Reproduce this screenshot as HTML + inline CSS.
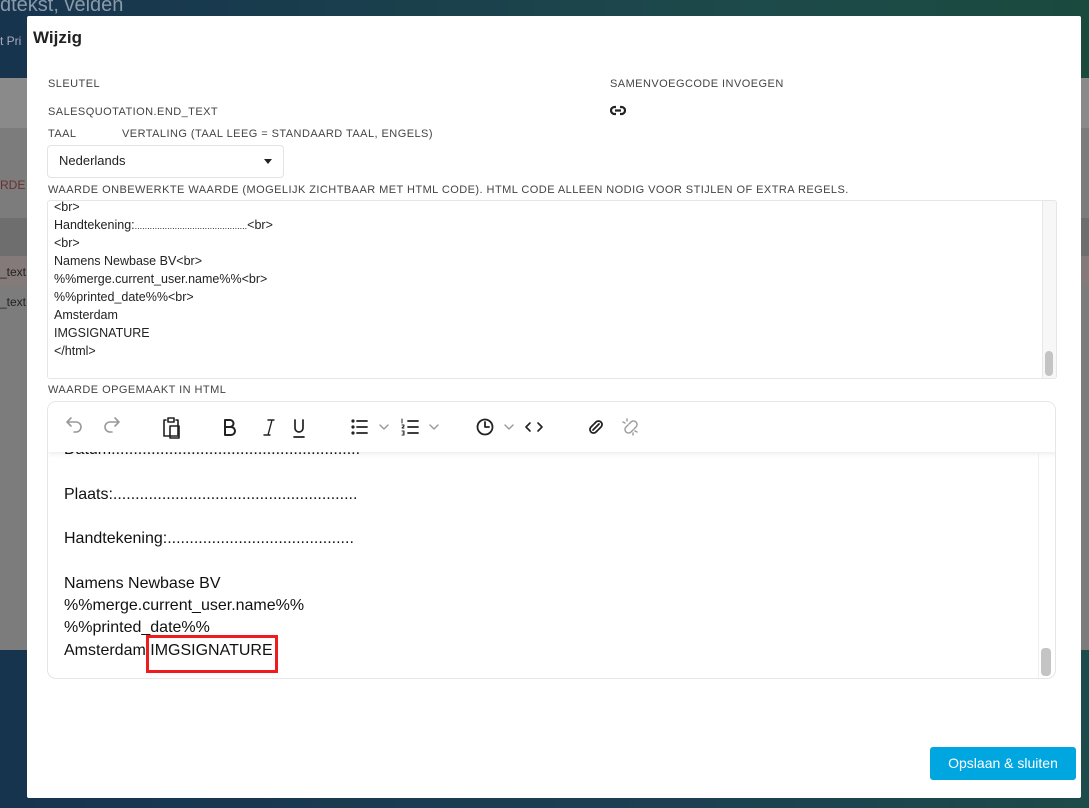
<!DOCTYPE html>
<html><head><meta charset="utf-8"><style>
*{box-sizing:border-box;margin:0;padding:0}
body{width:1089px;height:808px;position:relative;overflow:hidden;font-family:"Liberation Sans",sans-serif;background:#7a7a7a}
.abs{position:absolute}
.lbl{position:absolute;font-size:11px;color:#444;letter-spacing:.45px;white-space:nowrap}
.raw div{height:18px;line-height:18px;font-size:12.5px;color:#222;white-space:nowrap}
.ed div{position:absolute;left:16px;font-size:16px;color:#111;white-space:nowrap;line-height:20px}
</style></head><body>
<div class="abs" style="left:0;top:0;width:1089px;height:78px;background:linear-gradient(90deg,#17344f,#1d4a4a 70%,#1a4a3e)"></div>
<div class="abs" style="left:0;top:-6px;font-size:20px;color:#8a9aa8">dtekst, velden</div>
<div class="abs" style="left:0;top:34px;font-size:12px;color:#aab">t Pri</div>
<div class="abs" style="left:0;top:78px;width:1089px;height:50px;background:#8a8a8a"></div>
<div class="abs" style="left:0;top:128px;width:1089px;height:522px;background:#7c7c7c"></div>
<div class="abs" style="left:0;top:218px;width:1089px;height:38px;background:#6e6e6e"></div>
<div class="abs" style="left:0;top:256px;width:1089px;height:30px;background:#847a7a"></div>
<div class="abs" style="left:0;top:650px;width:1089px;height:158px;background:linear-gradient(90deg,#17344f,#1c3f52 60%,#1d4a4a)"></div>
<div class="abs" style="left:0;top:178px;font-size:12px;color:#6a3030">RDE</div>
<div class="abs" style="left:0;top:265px;font-size:12px;color:#222">_text</div>
<div class="abs" style="left:0;top:295px;font-size:12px;color:#222">_text</div>

<div class="abs" style="left:27px;top:16px;width:1054px;height:782px;background:#fff;border-radius:2px"></div>
<div class="abs" style="left:33px;top:28px;font-size:17px;font-weight:bold;color:#222">Wijzig</div>
<div class="lbl" style="left:48px;top:78px">SLEUTEL</div>
<div class="lbl" style="left:48px;top:106px">SALESQUOTATION.END_TEXT</div>
<div class="lbl" style="left:610px;top:78px">SAMENVOEGCODE INVOEGEN</div>
<svg class="abs" style="left:610px;top:105px" width="16" height="11" viewBox="0 0 16 11"><path d="M6 2H4.5a3.5 3.5 0 0 0 0 7H6M10 2h1.5a3.5 3.5 0 0 1 0 7H10M5 5.5h6" fill="none" stroke="#222" stroke-width="2.2"/></svg>
<div class="lbl" style="left:48px;top:128px">TAAL</div>
<div class="lbl" style="left:122px;top:128px">VERTALING (TAAL LEEG = STANDAARD TAAL, ENGELS)</div>
<div class="abs" style="left:47px;top:145px;width:237px;height:33px;border:1px solid #e3e3e3;border-radius:4px"></div>
<div class="abs" style="left:59px;top:153px;font-size:13px;color:#222">Nederlands</div>
<div class="abs" style="left:264px;top:159px;width:0;height:0;border-left:4.5px solid transparent;border-right:4.5px solid transparent;border-top:5px solid #222"></div>
<div class="lbl" style="left:48px;top:184px">WAARDE ONBEWERKTE WAARDE (MOGELIJK ZICHTBAAR MET HTML CODE). HTML CODE ALLEEN NODIG VOOR STIJLEN OF EXTRA REGELS.</div>
<div class="abs" style="left:47px;top:200px;width:1010px;height:179px;border:1px solid #e6e6e6;border-radius:3px;overflow:hidden">
 <div class="raw abs" style="left:6px;top:-3px">
  <div>&lt;br&gt;</div><div>Handtekening:<span style="font-size:9px">.............................................</span>&lt;br&gt;</div><div>&lt;br&gt;</div><div>Namens Newbase BV&lt;br&gt;</div><div>%%merge.current_user.name%%&lt;br&gt;</div><div>%%printed_date%%&lt;br&gt;</div><div>Amsterdam</div><div>IMGSIGNATURE</div><div>&lt;/html&gt;</div>
 </div>
 <div class="abs" style="left:994px;top:0;width:15px;height:179px;background:#f7f7f7;border-left:1px solid #e8e8e8"></div>
 <div class="abs" style="left:997px;top:150px;width:8px;height:25px;background:#c4c4c4;border-radius:4px"></div>
</div>
<div class="lbl" style="left:48px;top:384px">WAARDE OPGEMAAKT IN HTML</div>
<div class="abs ed" style="left:47px;top:401px;width:1009px;height:278px;border:1px solid #e6e6e6;border-radius:9px;overflow:hidden">
 <div style="top:38px">Datum:.......................................................</div>
 <div style="top:83px">Plaats:.......................................................</div>
 <div style="top:127px">Handtekening:..........................................</div>
 <div style="top:172px">Namens Newbase BV</div>
 <div style="top:194px">%%merge.current_user.name%%</div>
 <div style="top:216px">%%printed_date%%</div>
 <div style="top:239px">Amsterdam IMGSIGNATURE</div>
 <div style="left:98px;top:233px;width:132px;height:38px;border:3px solid #ee1c1c"></div>
 <div class="abs" style="left:0;top:0;width:1009px;height:50px;background:#fff;box-shadow:0 2px 5px rgba(0,0,0,.08)"></div>
 <div class="abs" style="left:993px;top:246px;width:10px;height:28px;background:#c4c4c4;border-radius:4px"></div>
 <div class="abs" style="left:990px;top:50px;width:1px;height:228px;background:#eee"></div>
</div>
<svg class="abs" style="left:47px;top:401px" width="640" height="50" viewBox="0 0 640 50" fill="none" stroke-linecap="round" stroke-linejoin="round">
 <g stroke="#999" stroke-width="1.6"><path d="M24 21l-4 4 4 4M20 25h9a5 5 0 0 1 0 10h-2" transform="translate(0,-4)"/><path d="M70 21l4 4-4 4M74 25h-9a5 5 0 0 0 0 10h2" transform="translate(-2,-4)"/></g>
 <g stroke="#222" stroke-width="1.6">
  <path d="M119 19h-2v16h14v-16h-2M121 17h6v4h-6z M123 25h9v12h-9z"/>
  <path d="M178 19h5a3.5 3.5 0 0 1 0 7h-5zM178 26h6a3.8 3.8 0 0 1 0 8h-6z" stroke-width="2"/>
  <path d="M217 34h6M221 19h6M225 19l-4 15" stroke-width="1.4"/>
  <path d="M248 19v8a4 4 0 0 0 8 0v-8M247 36h10" stroke-width="1.7"/>
  <path d="M310 20h10M310 26h10M310 32h10" stroke-width="1.8"/><circle cx="306" cy="20" r=".8" fill="#222"/><circle cx="306" cy="26" r=".8" fill="#222"/><circle cx="306" cy="32" r=".8" fill="#222"/>
  <path d="M361 20h10M361 26h10M361 32h10" stroke-width="1.8"/>
  <path d="M355 18v4M355 24h2v1l-2 2h2M355 30h2v2h-1 1v2h-2" stroke-width="1"/>
  <circle cx="438" cy="26" r="7.5" stroke-width="1.8"/><path d="M438 21v5h4" stroke-width="1.8"/>
  <path d="M483 22l-4 4 4 4M491 22l4 4-4 4"/>
  <path d="M546 24l-2 2a3.5 3.5 0 0 0 5 5l2-2M552 28l2-2a3.5 3.5 0 0 0-5-5l-2 2M546 29l6-6" stroke-width="1.8"/>
 </g>
 <g stroke="#999" stroke-width="1.4"><path d="M333 24l4 4 4-4M383 24l4 4 4-4M458 24l4 4 4-4"/>
  <path d="M581 24l-2 2a3.5 3.5 0 0 0 5 5l2-2M587 28l2-2a3.5 3.5 0 0 0-5-5l-2 2M576 21l2 1M580 18v2M590 31l-2-1M586 34v-2"/></g>
</svg>
<div class="abs" style="left:930px;top:747px;width:146px;height:33px;background:#00a6df;border-radius:3px;color:#fff;font-size:14px;text-align:center;line-height:33px">Opslaan &amp; sluiten</div>
</body></html>
